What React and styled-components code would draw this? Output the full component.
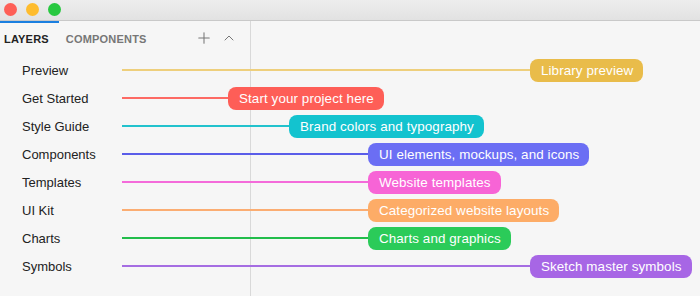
import styled, { createGlobalStyle } from "styled-components";
import { Plus, ChevronUp } from "lucide-react";

const GlobalStyle = createGlobalStyle`
  html, body {
    margin: 0;
    padding: 0;
    background: #f6f6f6;
    font-family: "Liberation Sans", Arial, sans-serif;
  }
`;

const pages = [
  { name: "Preview", note: "Library preview", color: "#e9bc4a", line: "#eecf7c", start: 530 },
  { name: "Get Started", note: "Start your project here", color: "#fe5e57", line: "#fd6a64", start: 228 },
  { name: "Style Guide", note: "Brand colors and typography", color: "#13c3cf", line: "#22c2cd", start: 289 },
  { name: "Components", note: "UI elements, mockups, and icons", color: "#6b6ef4", line: "#5a5de9", start: 368 },
  { name: "Templates", note: "Website templates", color: "#f764d6", line: "#f46bda", start: 368 },
  { name: "UI Kit", note: "Categorized website layouts", color: "#fdac67", line: "#fbad72", start: 368 },
  { name: "Charts", note: "Charts and graphics", color: "#2bcb59", line: "#22bd4b", start: 368 },
  { name: "Symbols", note: "Sketch master symbols", color: "#a766e5", line: "#a56de2", start: 530 },
];

const LABEL_WIDTH = 122;

const App = () => {
  return (
    <Window>
      <GlobalStyle />
      <TitleBar>
        <Light color="#fe5f57" />
        <Light color="#febc2e" />
        <Light color="#28c840" />
      </TitleBar>
      <Workspace>
        <Header>
          <Tab active>Layers</Tab>
          <Tab>Components</Tab>
          <Tools>
            <Plus size={18} strokeWidth={1.4} />
            <ChevronUp size={16} strokeWidth={1.5} />
          </Tools>
        </Header>
        <Rows>
          {pages.map((page) => (
            <Row key={page.name}>
              <Label>{page.name}</Label>
              <Connector
                color={page.line}
                style={{ width: page.start - LABEL_WIDTH }}
              />
              <Pill color={page.color}>{page.note}</Pill>
            </Row>
          ))}
        </Rows>
      </Workspace>
    </Window>
  );
};

export default App;

const Window = styled.div`
  width: 700px;
  height: 296px;
  overflow: hidden;
  display: flex;
  flex-direction: column;
  background: #f6f6f6;
`;

const TitleBar = styled.div`
  height: 21px;
  flex-shrink: 0;
  display: flex;
  align-items: center;
  gap: 9px;
  padding-left: 4px;
  box-sizing: border-box;
  background: linear-gradient(#ededed, #e2e2e2);
  border-bottom: 1px solid #c9c9c9;
`;

const Light = styled.span`
  width: 13px;
  height: 13px;
  border-radius: 50%;
  background: ${(p) => p.color};
  margin-top: -1px;
`;

const Workspace = styled.div`
  flex: 1;
  display: flex;
  flex-direction: column;
  background: linear-gradient(#d9d9d9, #d9d9d9) 250px 0 / 1px 100% no-repeat;
`;

const Header = styled.div`
  width: 250px;
  height: 35px;
  display: flex;
  align-items: center;
  box-sizing: border-box;
  padding-right: 13px;
`;

const Tab = styled.div`
  height: 100%;
  display: flex;
  align-items: center;
  box-sizing: border-box;
  padding: 0 ${(p) => (p.active ? "10px" : "0")} 2px 4px;
  margin-right: 3px;
  font-size: 11px;
  font-weight: bold;
  text-transform: uppercase;
  letter-spacing: 0.2px;
  color: ${(p) => (p.active ? "#222" : "#777")};
  border-top: 2px solid ${(p) => (p.active ? "#1a7fe0" : "transparent")};
`;

const Tools = styled.div`
  margin-left: auto;
  display: flex;
  align-items: center;
  gap: 8px;
  color: #777;
  padding-bottom: 1px;
`;

const Rows = styled.div`
  display: flex;
  flex-direction: column;
`;

const Row = styled.div`
  height: 28px;
  display: flex;
  align-items: center;
`;

const Label = styled.div`
  width: ${LABEL_WIDTH - 22}px;
  padding-left: 22px;
  font-size: 13px;
  color: #222;
  white-space: nowrap;
`;

const Connector = styled.div`
  height: 1.5px;
  background: ${(p) => p.color};
`;

const Pill = styled.div`
  height: 23px;
  display: flex;
  align-items: center;
  padding: 0 10px 0 11px;
  border-radius: 8px;
  background: ${(p) => p.color};
  color: #fff;
  font-size: 13.4px;
  letter-spacing: 0.1px;
  white-space: nowrap;
`;
